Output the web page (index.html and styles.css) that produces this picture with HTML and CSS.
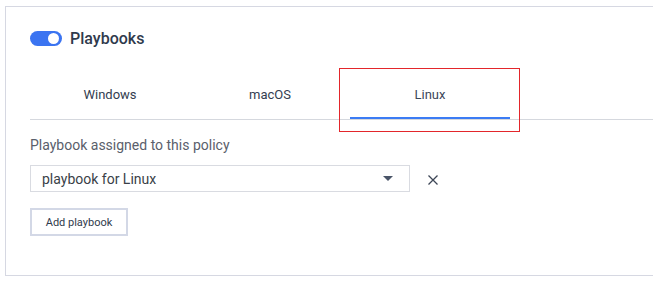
FILE: index.html
```html
<!DOCTYPE html>
<html>
<head>
<meta charset="utf-8">
<link rel="stylesheet" href="styles.css">
</head>
<body>
<div class="card">
  <div class="header">
    <span class="toggle"><span class="knob"></span></span>
    <span class="title">Playbooks</span>
  </div>
  <div class="tabs">
    <div class="tab">Windows</div>
    <div class="tab">macOS</div>
    <div class="tab active">Linux</div>
  </div>
  <div class="field">
    <div class="label">Playbook assigned to this policy</div>
    <div class="row">
      <div class="select">
        <span class="value">playbook for Linux</span>
        <svg class="caret" width="10" height="6" viewBox="0 0 10 6"><path d="M0 0h10L5 5z" fill="#4a5568"/></svg>
      </div>
      <svg class="close" width="10" height="10" viewBox="0 0 10 10"><path d="M0.5 0.5l9 9M9.5 0.5l-9 9" stroke="#3d4656" stroke-width="1.3"/></svg>
    </div>
    <button class="btn">Add playbook</button>
  </div>
</div>
<div class="highlight"></div>
</body>
</html>
```
FILE: styles.css
```css
html, body {
  margin: 0;
  padding: 0;
  background: #fff;
  overflow: hidden;
  font-family: Roboto, "Liberation Sans", sans-serif;
}
.card {
  margin: 6px 0 0 5px;
  width: 648px;
  height: 270px;
  border: 1px solid #d6d8e2;
  border-right: none;
  padding: 24px 0 0 24px;
  box-sizing: border-box;
}
.header {
  display: flex;
  align-items: center;
  height: 15px;
}
.toggle {
  width: 32px;
  height: 15px;
  border-radius: 8px;
  background: #3b74f1;
  position: relative;
  display: inline-block;
}
.knob {
  position: absolute;
  right: 3px;
  top: 2px;
  width: 11px;
  height: 11px;
  border-radius: 50%;
  background: #fff;
}
.title {
  margin-left: 8px;
  font-size: 16px;
  font-weight: 500;
  color: #2f3a4c;
  line-height: 15px;
}
.tabs {
  display: flex;
  margin-top: 24px;
  border-bottom: 1px solid #d5d8de;
}
.tab {
  width: 160px;
  height: 49px;
  box-sizing: border-box;
  display: flex;
  align-items: center;
  justify-content: center;
  font-size: 13px;
  font-weight: 400;
  color: #333d50;
}
.tab.active {
  border-bottom: 2px solid #3b7cf4;
  padding-top: 1px;
  color: #3c475a;
}
.field {
  padding-top: 15px;
}
.label {
  font-size: 14px;
  line-height: 20px;
  color: #5a606b;
}
.row {
  display: flex;
  align-items: center;
  margin-top: 10px;
}
.select {
  width: 380px;
  height: 27px;
  box-sizing: border-box;
  border: 1px solid #d9dbe1;
  display: flex;
  align-items: center;
  justify-content: space-between;
  padding: 0 16px 0 11px;
}
.value {
  font-size: 14px;
  color: #3a3f48;
}
.close {
  margin-left: 18px;
  margin-top: 2px;
}
.btn {
  display: block;
  margin-top: 16px;
  width: 98px;
  height: 28px;
  background: #fff;
  border: 2px solid #d3d8e6;
  font-family: Roboto, "Liberation Sans", sans-serif;
  font-size: 11px;
  font-weight: 400;
  color: #2f3a4c;
  padding: 0;
}
.highlight {
  position: absolute;
  left: 339px;
  top: 68px;
  width: 181px;
  height: 64px;
  box-sizing: border-box;
  border: 1px solid #e3262b;
}
```
